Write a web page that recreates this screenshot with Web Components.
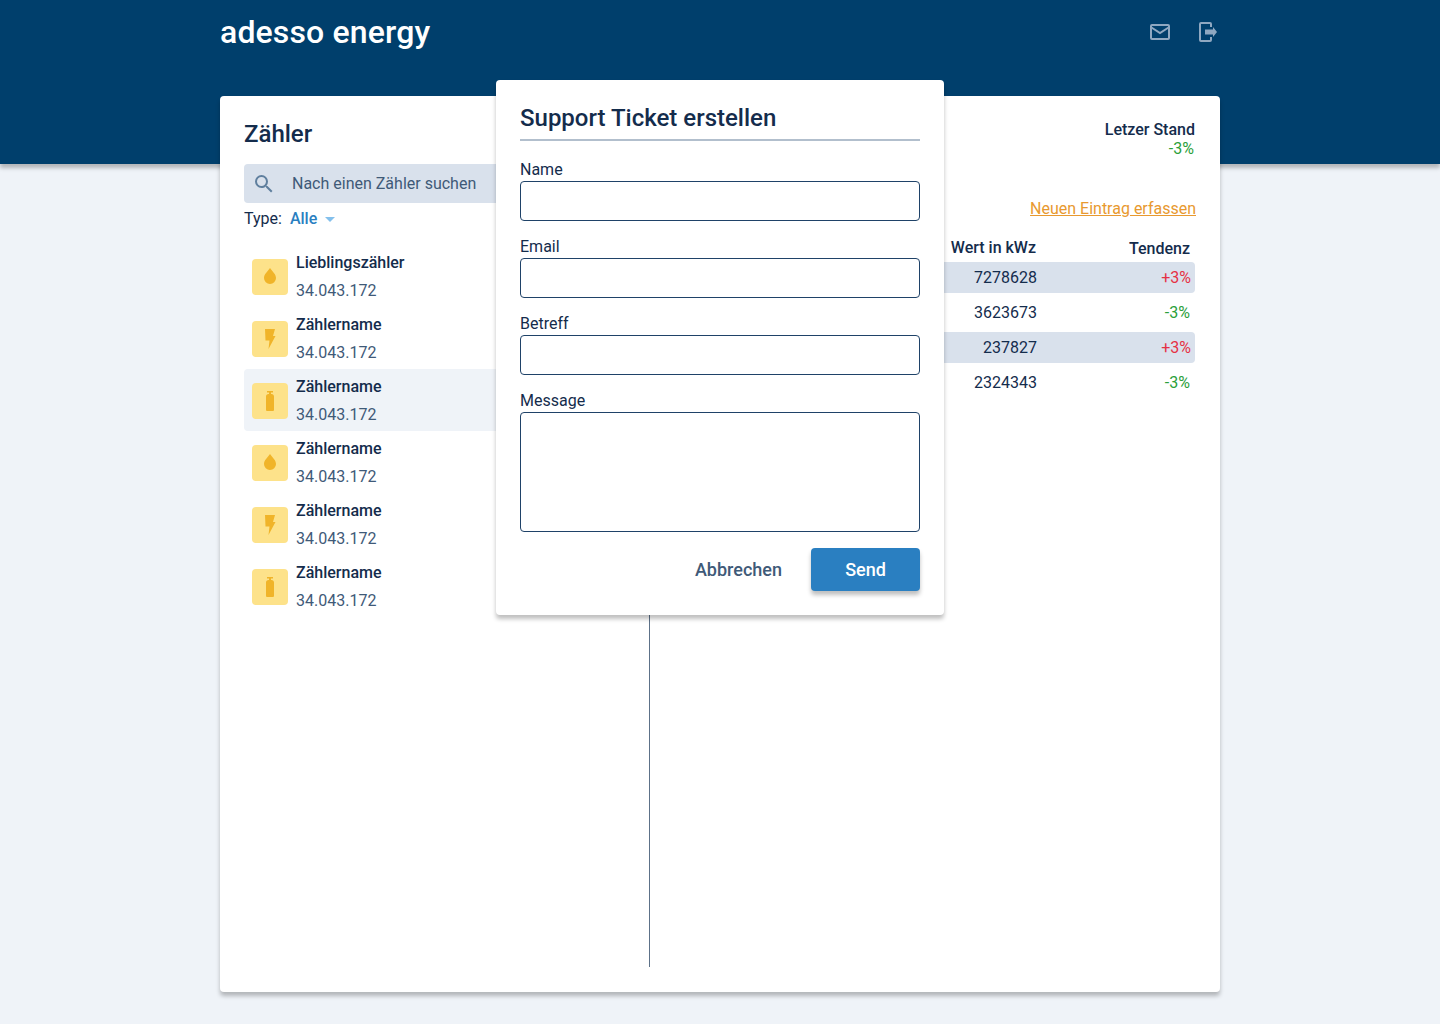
<!DOCTYPE html>
<html lang="de">
<head>
<meta charset="utf-8">
<title>adesso energy</title>
<style>
  html, body { margin: 0; padding: 0; }
  body { background: #eff3f8; font-family: Roboto, "Liberation Sans", sans-serif; color: #142c4c; height: 1024px; overflow: hidden; }
</style>
</head>
<body>
<app-shell>
  <top-bar></top-bar>
  <main-card>
    <meter-panel slot="left">
      <meter-item type="drop" name="Lieblingszähler"></meter-item>
      <meter-item type="bolt" name="Zählername"></meter-item>
      <meter-item type="gas" name="Zählername" selected></meter-item>
      <meter-item type="drop" name="Zählername"></meter-item>
      <meter-item type="bolt" name="Zählername"></meter-item>
      <meter-item type="gas" name="Zählername"></meter-item>
    </meter-panel>
    <reading-panel slot="right">
      <reading-row wert="7278628" tendenz="+3%" shaded></reading-row>
      <reading-row wert="3623673" tendenz="-3%"></reading-row>
      <reading-row wert="237827" tendenz="+3%" shaded></reading-row>
      <reading-row wert="2324343" tendenz="-3%"></reading-row>
    </reading-panel>
  </main-card>
  <ticket-dialog>
    <form-field label="Name"></form-field>
    <form-field label="Email"></form-field>
    <form-field label="Betreff"></form-field>
    <form-field label="Message" multiline></form-field>
  </ticket-dialog>
</app-shell>

<script>
// Seitengeruest: Kopfbereich, Karte und Dialog darueber
class AppShell extends HTMLElement {
  constructor() {
    super();
    this.attachShadow({ mode: 'open' });
    this.shadowRoot.innerHTML = `
      <style>
        :host { display: block; position: relative; width: 1440px; height: 1024px; }
      </style>
      <slot></slot>
    `;
  }
}

class TopBar extends HTMLElement {
  constructor() {
    super();
    this.attachShadow({ mode: 'open' });
    this.shadowRoot.innerHTML = `
      <style>
        :host {
          display: block;
          height: 164px;
          background: #003f6c;
          box-shadow: 0 4px 4px #00000040;
        }
        .inner {
          width: 1000px;
          margin: 0 auto;
          height: 64px;
          display: flex;
          align-items: center;
          justify-content: space-between;
        }
        .logo { color: #fff; font-size: 32px; font-weight: 500; letter-spacing: .15px; }
        .icons { display: flex; gap: 24px; }
        svg { display: block; width: 24px; height: 24px; }
      </style>
      <div class="inner">
        <div class="logo">adesso energy</div>
        <div class="icons">
          <svg viewBox="0 0 24 24" fill="none" stroke="#8fa8c1" stroke-width="2">
            <rect x="3" y="5" width="18" height="14" rx="1"/>
            <path d="M3.500 7.500 12 13l8.500-5.500"/>
          </svg>
          <svg viewBox="0 0 24 24" fill="none" stroke="#8fa8c1" stroke-width="2">
            <path d="M15 7V4a1 1 0 0 0-1-1H5a1 1 0 0 0-1 1v16a1 1 0 0 0 1 1h9a1 1 0 0 0 1-1v-3"/>
            <path d="M9 9.500h8V7l4 5-4 5v-2.500H9z" fill="#8fa8c1" stroke="none"/>
          </svg>
        </div>
      </div>
    `;
  }
}

class MainCard extends HTMLElement {
  constructor() {
    super();
    this.attachShadow({ mode: 'open' });
    this.shadowRoot.innerHTML = `
      <style>
        :host {
          display: grid;
          grid-template-columns: 430px 1fr;
          position: relative;
          width: 1000px;
          height: 896px;
          margin: -68px auto 0;
          background: #fff;
          border-radius: 4px;
          box-shadow: 0 4px 4px #00000040;
        }
        .left { border-right: 1px solid #5d7188; height: 871px; box-sizing: border-box; }
      </style>
      <div class="left"><slot name="left"></slot></div>
      <div><slot name="right"></slot></div>
    `;
  }
}

class MeterPanel extends HTMLElement {
  constructor() {
    super();
    this.attachShadow({ mode: 'open' });
    this.shadowRoot.innerHTML = `
      <style>
        :host { display: block; padding: 0 24px; }
        h2 { margin: 0; padding-top: 24px; font-size: 24px; line-height: 28px; font-weight: 500; color: #142c4c; }
        .search {
          display: flex;
          align-items: center;
          height: 39px;
          margin-top: 16px;
          padding-left: 8px;
          background: #d9e1ec;
          border-radius: 4px;
          color: #3f5a78;
          font-size: 16px;
        }
        .search svg { width: 24px; height: 24px; margin-right: 16px; }
        .type { display: flex; align-items: center; height: 30px; font-size: 16px; color: #142c4c; }
        .type b { font-weight: 500; color: #2a7fc1; margin-left: 8px; }
        .type i { width: 0; height: 0; margin: 2px 0 0 8px; border: 5px solid transparent; border-top-color: #84c0ec; border-bottom: 0; }
        .list { margin-top: 12px; }
      </style>
      <h2>Zähler</h2>
      <div class="search">
        <svg viewBox="0 0 24 24" fill="#5f7f9e"><path d="M15.500 14h-.79l-.28-.27A6.470 6.470 0 0 0 16 9.500 6.500 6.500 0 1 0 9.500 16c1.610 0 3.090-.59 4.270-1.570l.27.28v.79l5 4.990L20.490 19l-4.990-5zm-6 0C7.010 14 5 11.990 5 9.500S7.010 5 9.500 5 14 7.010 14 9.500 11.990 14 9.500 14z"/></svg>
        Nach einen Zähler suchen
      </div>
      <div class="type">Type:<b>Alle</b><i></i></div>
      <div class="list"><slot></slot></div>
    `;
  }
}

const METER_ICONS = {
  drop: '<path d="M12 3c2.400 3.400 6 6.300 6 10a6 6 0 0 1-12 0c0-3.700 3.600-6.600 6-10z"/>',
  bolt: '<path d="M7 2h10l-2 7h2.500L10.500 22l1-8.500H7.500z"/>',
  gas: '<path d="M9 2h6v1.500h-2V5h.5C15 5 16 6 16 7.500V21a1 1 0 0 1-1 1H9a1 1 0 0 1-1-1V7.500C8 6 9 5 10.500 5h.5V3.500H9z"/>'
};

class MeterItem extends HTMLElement {
  constructor() {
    super();
    this.attachShadow({ mode: 'open' });
  }

  connectedCallback() {
    const icon = METER_ICONS[this.getAttribute('type')];
    this.shadowRoot.innerHTML = `
      <style>
        :host {
          display: flex;
          height: 62px;
          padding-left: 8px;
          border-radius: 4px;
        }
        :host([selected]) { background: #eff3f8; }
        .icon {
          width: 36px;
          height: 36px;
          margin: 14px 8px 0 0;
          background: #fde28a;
          border-radius: 4px;
        }
        svg { display: block; width: 36px; height: 36px; padding: 6px; box-sizing: border-box; fill: #f0b429; }
        .name { font-size: 16px; font-weight: 500; line-height: 20px; margin-top: 8px; color: #142c4c; }
        .value { font-size: 16px; line-height: 20px; margin-top: 8px; color: #3f5a78; }
      </style>
      <div class="icon"><svg viewBox="0 0 24 24">${icon}</svg></div>
      <div>
        <div class="name">${this.getAttribute('name')}</div>
        <div class="value">34.043.172</div>
      </div>
    `;
  }
}

class ReadingPanel extends HTMLElement {
  constructor() {
    super();
    this.attachShadow({ mode: 'open' });
    this.shadowRoot.innerHTML = `
      <style>
        :host { display: block; padding: 24px 25px 0 23px; }
        .stand { text-align: right; font-size: 16px; line-height: 19px; font-weight: 500; color: #142c4c; }
        .stand span { display: block; font-weight: 400; color: #2ba03a; padding-right: 1px; }
        .link { display: block; margin: 41px -1px 0 0; text-align: right; font-size: 16px; line-height: 19px; color: #e8992f; text-decoration: underline; }
        .head {
          display: grid;
          grid-template-columns: 1fr 153px;
          margin-top: 21px;
          padding-right: 5px;
          height: 19px;
          font-size: 16px;
          line-height: 19px;
          font-weight: 500;
          color: #142c4c;
          text-align: right;
        }
        .head div:first-child { padding-right: 1px; margin-top: -1px; }
        .rows { margin-top: 4px; display: grid; row-gap: 4px; }
      </style>
      <div class="stand">Letzer Stand<span>-3%</span></div>
      <a class="link">Neuen Eintrag erfassen</a>
      <div class="head"><div>Wert in kWz</div><div>Tendenz</div></div>
      <div class="rows"><slot></slot></div>
    `;
  }
}

class ReadingRow extends HTMLElement {
  constructor() {
    super();
    this.attachShadow({ mode: 'open' });
  }

  connectedCallback() {
    const t = this.getAttribute('tendenz');
    this.shadowRoot.innerHTML = `
      <style>
        :host {
          display: grid;
          grid-template-columns: 1fr 153px;
          height: 31px;
          align-items: center;
          padding-right: 5px;
          border-radius: 4px;
          font-size: 16px;
          text-align: right;
          color: #142c4c;
        }
        :host([shaded]) { background: #d9e1ec; }
        .up { color: #e53145; margin-right: -1px; }
        .down { color: #2ba03a; }
      </style>
      <div>${this.getAttribute('wert')}</div>
      <div class="${t[0] === '+' ? 'up' : 'down'}">${t}</div>
    `;
  }
}

class TicketDialog extends HTMLElement {
  constructor() {
    super();
    this.attachShadow({ mode: 'open' });
    this.shadowRoot.innerHTML = `
      <style>
        :host {
          display: block;
          position: absolute;
          left: 496px;
          top: 80px;
          width: 448px;
          height: 535px;
          box-sizing: border-box;
          padding: 24px;
          background: #fff;
          border-radius: 4px;
          box-shadow: 0 4px 4px #00000040;
        }
        h2 {
          margin: 0;
          height: 35px;
          font-size: 24px;
          line-height: 28px;
          font-weight: 500;
          color: #142c4c;
          border-bottom: 2px solid #b2bfcd;
        }
        .fields { margin-top: 19px; display: grid; row-gap: 16px; }
        .actions { display: flex; justify-content: flex-end; align-items: center; margin-top: 16px; }
        .cancel { font-size: 18px; font-weight: 500; color: #3f5a78; margin-right: 29px; }
        .send {
          width: 109px;
          height: 43px;
          display: flex;
          align-items: center;
          justify-content: center;
          background: #2a7fc1;
          color: #fff;
          font-size: 18px;
          font-weight: 500;
          border-radius: 4px;
          box-shadow: 0 4px 4px #00000040;
        }
      </style>
      <h2>Support Ticket erstellen</h2>
      <div class="fields"><slot></slot></div>
      <div class="actions">
        <div class="cancel">Abbrechen</div>
        <div class="send">Send</div>
      </div>
    `;
  }
}

class FormField extends HTMLElement {
  constructor() {
    super();
    this.attachShadow({ mode: 'open' });
  }

  connectedCallback() {
    this.shadowRoot.innerHTML = `
      <style>
        :host { display: block; }
        label { display: block; font-size: 16px; line-height: 19px; padding-bottom: 2px; color: #142c4c; }
        .box {
          height: 40px;
          box-sizing: border-box;
          border: 1px solid #1f4268;
          border-radius: 4px;
          background: #fff;
        }
        :host([multiline]) .box { height: 120px; }
      </style>
      <label>${this.getAttribute('label')}</label>
      <div class="box"></div>
    `;
  }
}

customElements.define('app-shell', AppShell);
customElements.define('top-bar', TopBar);
customElements.define('main-card', MainCard);
customElements.define('meter-panel', MeterPanel);
customElements.define('meter-item', MeterItem);
customElements.define('reading-panel', ReadingPanel);
customElements.define('reading-row', ReadingRow);
customElements.define('ticket-dialog', TicketDialog);
customElements.define('form-field', FormField);
</script>
</body>
</html>
